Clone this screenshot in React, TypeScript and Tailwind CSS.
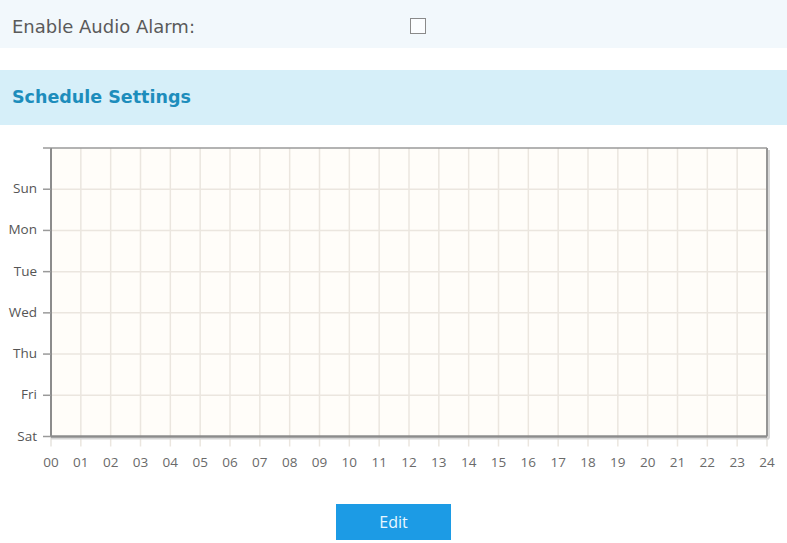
import React from "react";

const DAYS = ["Sun", "Mon", "Tue", "Wed", "Thu", "Fri", "Sat"];
const HOURS = Array.from({ length: 25 }, (_, i) => String(i).padStart(2, "0"));

// plot geometry (svg coords, svg starts at page y=125)
const L = 51;
const R = 767;
const T = 23;
const B = 311.5;
const rowH = (B - T) / 7;
const colW = (R - L) / 24;

function ScheduleChart() {
  const labelFont = { fontFamily: '"Open Sans", sans-serif' };
  return (
    <svg width={787} height={355} className="block">
      <rect x={L} y={T} width={R - L} height={B - T} fill="#fffdf9" />

      {/* vertical grid + ticks under the axis */}
      {HOURS.slice(1, 24).map((_, i) => {
        const x = L + (i + 1) * colW;
        return <line key={"v" + i} x1={x} x2={x} y1={T} y2={B + 10} stroke="#ebe6df" strokeWidth={1.5} />;
      })}
      <line x1={R} x2={R} y1={B} y2={B + 10} stroke="#e6e3de" strokeWidth={1.5} />
      <line x1={L} x2={L} y1={B} y2={B + 10} stroke="#e6e3de" strokeWidth={1.5} />

      {/* horizontal grid */}
      {DAYS.slice(0, 6).map((_, i) => {
        const y = T + (i + 1) * rowH;
        return <line key={"h" + i} x1={L} x2={R} y1={y} y2={y} stroke="#ebe6df" strokeWidth={1.5} />;
      })}

      {/* frame */}
      <line x1={L} x2={R} y1={T} y2={T} stroke="#9a9a9a" strokeWidth={1.5} />
      <line x1={R + 2} x2={R + 2} y1={T + 2} y2={B + 2} stroke="#d8d8d8" strokeWidth={2} />
      <line x1={R} x2={R} y1={T} y2={B} stroke="#959595" strokeWidth={2} />
      <line x1={L} x2={R + 2} y1={B + 2} y2={B + 2} stroke="#d6d6d6" strokeWidth={2} />
      <line x1={L} x2={R} y1={B} y2={B} stroke="#8c8c8c" strokeWidth={2.5} />
      <line x1={L} x2={L} y1={T} y2={B} stroke="#8c8c8c" strokeWidth={2} />

      {/* left ticks */}
      <line x1={43} x2={L} y1={T} y2={T} stroke="#9a9a9a" strokeWidth={1.5} />
      {DAYS.map((d, i) => {
        const y = T + (i + 1) * rowH;
        return (
          <g key={d}>
            <line x1={43} x2={L} y1={y} y2={y} stroke="#9a9a9a" strokeWidth={1.5} />
            <text x={37} y={y + 4} textAnchor="end" fontSize={13.5} fill="#555555" style={labelFont}>
              {d}
            </text>
          </g>
        );
      })}

      {HOURS.map((h, i) => (
        <text key={h} x={L + i * colW} y={342} textAnchor="middle" fontSize={13.5} fill="#6a6a6a" style={labelFont}>
          {h}
        </text>
      ))}
    </svg>
  );
}

export default function App() {
  return (
    <div className="w-[787px] h-[543px] bg-white overflow-hidden">
      {/* audio alarm row */}
      <div className="h-[48px] bg-[#f2f8fc] flex items-center pl-[12px] pt-[4px]">
        <span
          className="w-[398px] text-[18px] text-[#5a5a5a]"
          style={{ fontFamily: '"DejaVu Sans", sans-serif' }}
        >
          Enable Audio Alarm:
        </span>
        <span className="w-[16px] h-[16px] border-[1.5px] border-[#8a8a8a] bg-[#fbfdff]" />
      </div>

      <div className="h-[22px]" />

      {/* section header */}
      <div className="h-[55px] bg-[#d6eff9] flex items-center pl-[12px]">
        <span
          className="text-[17.5px] font-bold text-[#1d8dbc]"
          style={{ fontFamily: '"DejaVu Sans", sans-serif' }}
        >
          Schedule Settings
        </span>
      </div>

      <ScheduleChart />

      <div className="flex justify-center pt-[24px]">
        <button
          className="w-[115px] h-[36px] bg-[#1c9be5] text-[#e8f7ff] text-[16px]"
          style={{ fontFamily: '"Open Sans", sans-serif' }}
        >
          Edit
        </button>
      </div>
    </div>
  );
}
